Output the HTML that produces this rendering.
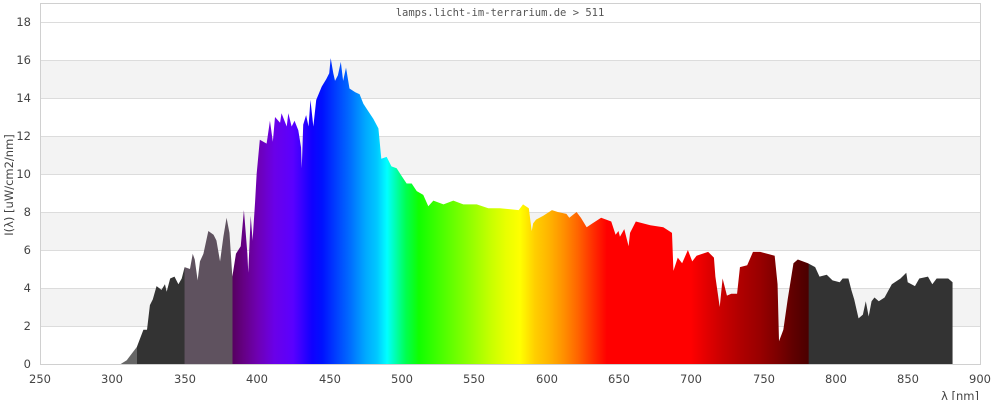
<!DOCTYPE html>
<html><head><meta charset="utf-8"><style>
html,body{margin:0;padding:0;background:#fff;width:1000px;height:400px;overflow:hidden}
svg{display:block}
text{font-family:"DejaVu Sans","Liberation Sans",sans-serif;font-size:11.5px;fill:#444}
</style></head><body>
<svg width="1000" height="400" viewBox="0 0 1000 400">
<defs>
<linearGradient id="sp" gradientUnits="userSpaceOnUse" x1="0" y1="0" x2="1000" y2="0">
<stop offset="0.300" stop-color="#666"/>
<stop offset="0.3170" stop-color="#666"/>
<stop offset="0.3171" stop-color="#333"/>
<stop offset="0.3500" stop-color="#333"/>
<stop offset="0.3501" stop-color="#5f525f"/>
<stop offset="0.3830" stop-color="#5f525f"/>
<stop offset="0.3831" stop-color="#560060"/>
<stop offset="0.390" stop-color="#640080"/>
<stop offset="0.400" stop-color="#6e00b0"/>
<stop offset="0.412" stop-color="#6a00e8"/>
<stop offset="0.425" stop-color="#5a00ff"/>
<stop offset="0.438" stop-color="#1000ff"/>
<stop offset="0.445" stop-color="#0010ff"/>
<stop offset="0.455" stop-color="#0040ff"/>
<stop offset="0.465" stop-color="#0070ff"/>
<stop offset="0.475" stop-color="#00a8ff"/>
<stop offset="0.483" stop-color="#00c8ff"/>
<stop offset="0.490" stop-color="#00ffff"/>
<stop offset="0.497" stop-color="#00ffa0"/>
<stop offset="0.503" stop-color="#00ff50"/>
<stop offset="0.512" stop-color="#10ff00"/>
<stop offset="0.525" stop-color="#40ff00"/>
<stop offset="0.545" stop-color="#88ff00"/>
<stop offset="0.562" stop-color="#c8ff00"/>
<stop offset="0.572" stop-color="#e8ff00"/>
<stop offset="0.582" stop-color="#ffff00"/>
<stop offset="0.592" stop-color="#ffd000"/>
<stop offset="0.602" stop-color="#ffb400"/>
<stop offset="0.612" stop-color="#ff9000"/>
<stop offset="0.622" stop-color="#ff6400"/>
<stop offset="0.632" stop-color="#ff3000"/>
<stop offset="0.642" stop-color="#ff0000"/>
<stop offset="0.700" stop-color="#ff0000"/>
<stop offset="0.712" stop-color="#e00000"/>
<stop offset="0.722" stop-color="#c80000"/>
<stop offset="0.735" stop-color="#ae0000"/>
<stop offset="0.748" stop-color="#980000"/>
<stop offset="0.760" stop-color="#7c0000"/>
<stop offset="0.770" stop-color="#620000"/>
<stop offset="0.7815" stop-color="#4a0000"/>
<stop offset="0.7816" stop-color="#333"/>
<stop offset="1" stop-color="#333"/>
</linearGradient>
</defs>
<!-- bands -->
<rect x="40" y="288" width="940" height="38" fill="#f3f3f3"/>
<rect x="40" y="212" width="940" height="38" fill="#f3f3f3"/>
<rect x="40" y="136" width="940" height="38" fill="#f3f3f3"/>
<rect x="40" y="60" width="940" height="38" fill="#f3f3f3"/>
<g stroke="#dcdcdc" stroke-width="1">
<line x1="40" y1="326.5" x2="980" y2="326.5"/>
<line x1="40" y1="288.5" x2="980" y2="288.5"/>
<line x1="40" y1="250.5" x2="980" y2="250.5"/>
<line x1="40" y1="212.5" x2="980" y2="212.5"/>
<line x1="40" y1="174.5" x2="980" y2="174.5"/>
<line x1="40" y1="136.5" x2="980" y2="136.5"/>
<line x1="40" y1="98.5" x2="980" y2="98.5"/>
<line x1="40" y1="60.5" x2="980" y2="60.5"/>
<line x1="40" y1="22.5" x2="980" y2="22.5"/>
</g>
<rect x="40.5" y="3.5" width="940" height="361" fill="none" stroke="#d0d0d0"/>
<g transform="translate(40,364) scale(1.4462,-19) translate(-250,0)">
<path fill="url(#sp)" d="M305.8,0 L310,0.2 317,0.9 319,1.3 321.5,1.8 324,1.8 326,3.1 328,3.4 330.6,4.1 334,3.9 336.4,4.2 337.6,3.8 340,4.5 343,4.6 345.7,4.2 348,4.5 350,5.1 353.7,5.0 355.6,5.8 357,5.5 359,4.4 360.6,5.4 363,5.8 366.4,7.0 370,6.8 372,6.5 374.5,5.4 376.8,6.7 379,7.7 381,6.9 383,4.6 385.5,5.8 388.8,6.2 391,8.1 393.4,5.8 394,4.8 395.7,7.8 397,6.5 398.7,8.5 399.8,10.0 402,11.8 406.7,11.6 409,12.8 411,11.7 412.5,13.0 416,12.7 417,13.2 420.6,12.5 421.7,13.2 424,12.5 426,12.8 428.6,12.3 430.5,11.4 431,10.3 432,12.6 434,13.1 435.7,12.5 437,13.9 439,12.5 441,13.9 444.8,14.6 448,15.0 450,15.3 451,16.1 452.8,15.3 454,14.9 456,15.2 458,15.9 459.6,14.9 461.6,15.6 464,14.5 468,14.3 471,14.2 473.6,13.7 477,13.3 480.5,12.9 484,12.4 486,10.8 489.7,10.9 493,10.4 496.6,10.3 500,9.9 503.5,9.5 507,9.5 510.5,9.1 515,8.9 518.5,8.3 522,8.6 529,8.4 535.8,8.6 542.7,8.4 552,8.4 560,8.2 568,8.2 581,8.1 584,8.4 588,8.2 590,7.0 591,7.4 593,7.6 598,7.8 604,8.1 608,8.0 614,7.9 616,7.7 621,8.0 624,7.7 628,7.2 632,7.4 638,7.7 645,7.5 648,6.8 650,7.0 651,6.7 654,7.1 657,6.2 658,6.9 662,7.5 672,7.3 681,7.2 687,6.9 688,4.9 691,5.6 694,5.3 698,6.0 701,5.4 704,5.7 712,5.9 716,5.6 717,4.6 720,3.0 722,4.5 725,3.6 728,3.7 732,3.7 734,5.1 739,5.2 743,5.9 748,5.9 758,5.7 760,4.2 761,1.2 763,1.6 764,1.8 767,3.4 771,5.3 774,5.5 781,5.3 786,5.1 789,4.6 794,4.7 798,4.4 803,4.3 805,4.5 809,4.5 811,3.9 813,3.4 816,2.4 819,2.6 821,3.3 823,2.5 825,3.3 827,3.5 830,3.3 834,3.5 839,4.2 845,4.5 849,4.8 850,4.3 855,4.1 858,4.5 864,4.6 867,4.2 870,4.5 878,4.5 881,4.3 881,0 Z"/>
</g>
<text x="500" y="16" text-anchor="middle" style="font-family:'DejaVu Sans Mono','Liberation Mono',monospace;font-size:10.5px;fill:#555">lamps.licht-im-terrarium.de &gt; 511</text>
<g text-anchor="end">
<text x="31" y="368">0</text>
<text x="31" y="330">2</text>
<text x="31" y="292">4</text>
<text x="31" y="254">6</text>
<text x="31" y="216">8</text>
<text x="31" y="178">10</text>
<text x="31" y="140">12</text>
<text x="31" y="102">14</text>
<text x="31" y="64">16</text>
<text x="31" y="26">18</text>
</g>
<g text-anchor="middle">
<text x="40" y="383">250</text>
<text x="112" y="383">300</text>
<text x="185" y="383">350</text>
<text x="257" y="383">400</text>
<text x="330" y="383">450</text>
<text x="402" y="383">500</text>
<text x="474" y="383">550</text>
<text x="547" y="383">600</text>
<text x="619" y="383">650</text>
<text x="691" y="383">700</text>
<text x="764" y="383">750</text>
<text x="836" y="383">800</text>
<text x="908" y="383">850</text>
<text x="980" y="383">900</text>
</g>
<text x="979" y="400" text-anchor="end">λ [nm]</text>
<text transform="translate(13,185) rotate(-90)" text-anchor="middle">I(λ) [uW/cm2/nm]</text>
</svg>
</body></html>
